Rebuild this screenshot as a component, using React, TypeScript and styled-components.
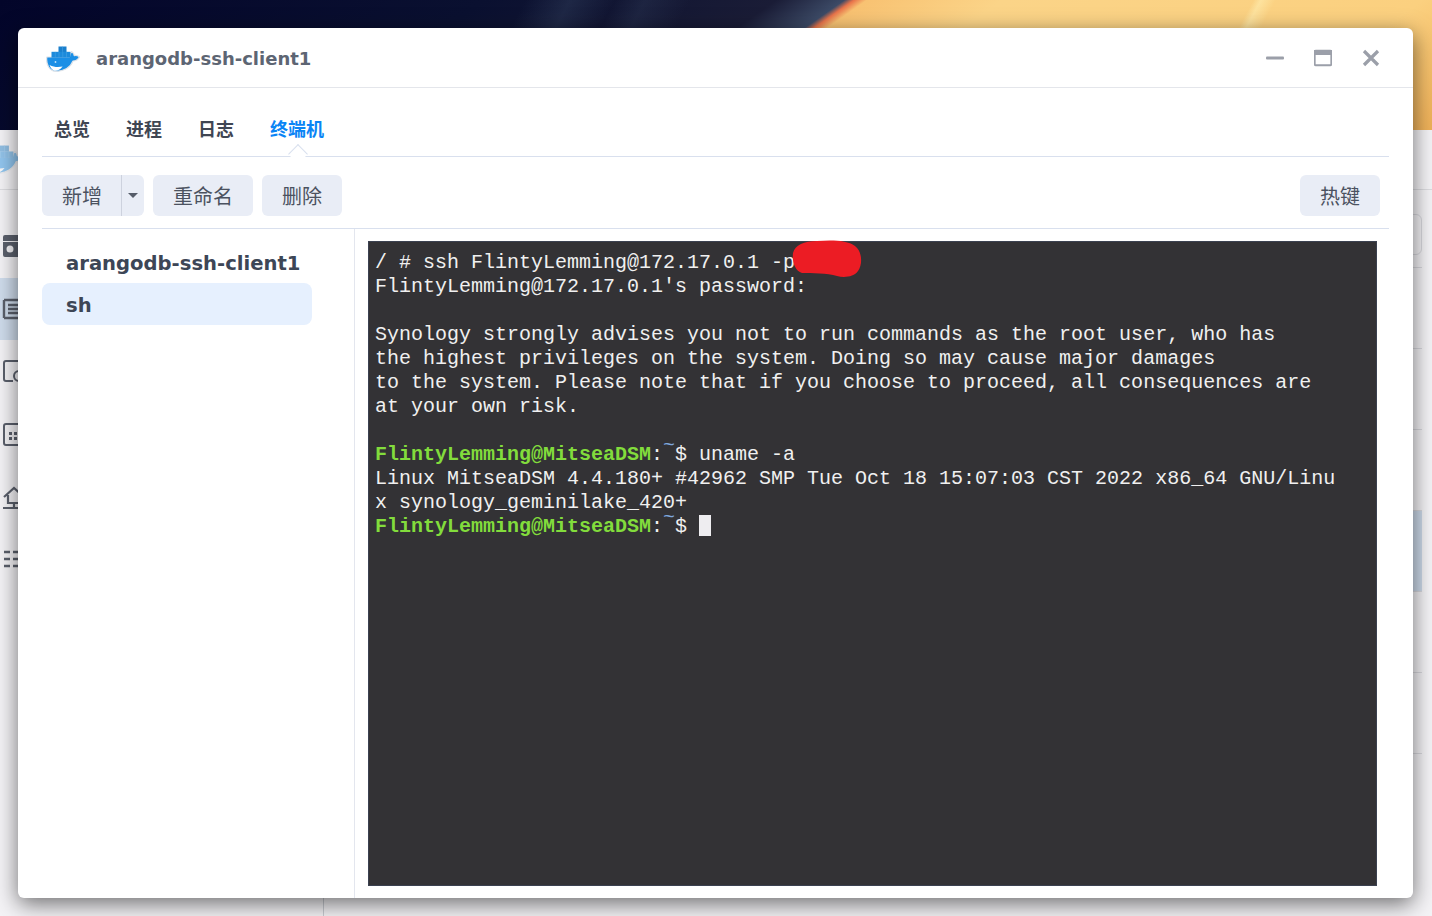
import React from "react";
import styled, { createGlobalStyle } from "styled-components";

const CJK = `"Noto Sans CJK SC", "Noto Sans", sans-serif`;
const LATIN_UI = `"DejaVu Sans", "Noto Sans CJK SC", sans-serif`;

const GlobalStyle = createGlobalStyle`
  html, body {
    margin: 0;
    padding: 0;
    background: #f4f3f6;
  }
  * {
    box-sizing: border-box;
  }
`;

const Desktop = styled.div`
  position: relative;
  display: flex;
  flex-direction: column;
  width: 1432px;
  height: 916px;
  overflow: hidden;
`;

const Wallpaper = styled.div`
  height: 130px;
  flex: none;
  background:
    linear-gradient(118deg, transparent 83.5%, rgba(255, 240, 180, 0.55) 84%, transparent 85%),
    linear-gradient(118deg, transparent 35%, rgba(70, 90, 120, 0.28) 38%, transparent 41%),
    linear-gradient(118deg, transparent 41%, rgba(70, 90, 120, 0.2) 43%, transparent 46%),
    linear-gradient(
      145deg,
      #03052a 0%,
      #0a1030 30%,
      #1a1c36 48%,
      #3c4a66 52.2%,
      #e8734a 52.8%,
      #f8c272 53.6%,
      #fbd488 62%,
      #fbd07f 88%,
      #eeb058 100%
    );
`;

const BackWindow = styled.div`
  flex: 1;
  display: grid;
  grid-template-columns: 324px 1fr;
  background: #f4f3f6;
`;

const BackSidebar = styled.div`
  border-right: 1px solid #c9ccd2;
`;

const BackHeader = styled.div`
  display: flex;
  align-items: center;
  height: 60px;
  padding-left: 0;
  border-bottom: 1px solid #dcdce0;
  overflow: hidden;

  svg {
    margin-left: -14px;
    opacity: 0.45;
  }
`;

const BackNav = styled.div`
  padding-top: 25px;
`;

const BackNavItem = styled.div<{ $active?: boolean }>`
  display: flex;
  align-items: center;
  height: 62.6px;
  padding-left: 2px;
  color: #5b606c;
  background: ${(p) => (p.$active ? "#cfdcec" : "transparent")};
`;

const BackMain = styled.div`
  border-top: 60px solid transparent;
  background-clip: padding-box;
`;

const BackHeaderLine = styled.div`
  height: 1px;
  margin-top: -1px;
  background: #dcdce0;
`;

const BackSearch = styled.div`
  height: 41px;
  margin: 24px 10px 0 0;
  border: 1px solid #d9d9de;
  border-radius: 6px;
`;

const BackList = styled.div`
  margin: 12px 10px 0 0;
  border-top: 1px solid #d9d9de;
`;

const BackRow = styled.div<{ $active?: boolean }>`
  height: 81px;
  border-bottom: 1px solid #d9d9de;
  background: ${(p) => (p.$active ? "#cddaea" : "transparent")};
`;

const ContainerWindow = styled.div`
  position: absolute;
  left: 18px;
  top: 28px;
  display: flex;
  flex-direction: column;
  width: 1395px;
  height: 870px;
  background: #fff;
  border-radius: 6px;
  box-shadow: 0 6px 22px rgba(0, 0, 0, 0.55);
`;

const TitleBar = styled.div`
  display: flex;
  align-items: center;
  flex: none;
  height: 60px;
  padding: 0 33px 0 28px;
  border-bottom: 1px solid #e4e6eb;
`;

const LogoSlot = styled.div`
  display: flex;
  padding-top: 2px;
`;

const TitleText = styled.span`
  flex: 1;
  margin-left: 16px;
  padding-top: 2px;
  font: 700 18px ${LATIN_UI};
  color: #5d6573;
`;

const WindowButtons = styled.div`
  display: flex;
  align-items: center;
  gap: 30px;
`;

const TabBar = styled.div`
  display: flex;
  flex: none;
  gap: 36px;
  height: 69px;
  margin: 0 24px;
  padding: 12px 0 0 12px;
  align-items: center;
  border-bottom: 1px solid #d9e0ee;
`;

const Tab = styled.div<{ $active?: boolean }>`
  position: relative;
  font: 700 18px/26px ${CJK};
  color: ${(p) => (p.$active ? "#0a84f5" : "#3f4653")};

  ${(p) =>
    p.$active
      ? `&::after {
          content: "";
          position: absolute;
          left: 50%;
          bottom: -20px;
          width: 13px;
          height: 13px;
          margin-left: -6.5px;
          background: #fff;
          border-left: 1px solid #d9e0ee;
          border-top: 1px solid #d9e0ee;
          transform: rotate(45deg);
        }`
      : ""}
`;

const Toolbar = styled.div`
  display: flex;
  flex: none;
  align-items: flex-start;
  gap: 9px;
  height: 72px;
  margin: 0 24px;
  padding: 18px 9px 0 0;
  border-bottom: 1px solid #d9e0ee;
`;

const ToolButton = styled.div`
  display: flex;
  align-items: center;
  justify-content: center;
  height: 41px;
  padding: 0 20px;
  border-radius: 6px;
  background: #e9edf6;
  font: 400 20px ${CJK};
  color: #4b5260;
`;

const SplitMain = styled(ToolButton)`
  width: 80px;
  padding: 0 0 0 1px;
  border-radius: 6px 0 0 6px;
  border-right: 1px solid #cdd2de;
`;

const SplitArrow = styled(ToolButton)`
  width: 22px;
  padding: 0;
  border-radius: 0 6px 6px 0;
`;

const SplitButton = styled.div`
  display: flex;
`;

const Caret = styled.span`
  width: 0;
  height: 0;
  border-left: 5px solid transparent;
  border-right: 5px solid transparent;
  border-top: 5px solid #555c69;
`;

const ToolSpacer = styled.div`
  flex: 1;
`;

const Content = styled.div`
  display: flex;
  flex: 1;
  min-height: 0;
  padding-left: 24px;
`;

const SessionList = styled.div`
  flex: none;
  width: 313px;
  padding-top: 12px;
  border-right: 1px solid #e3e6ee;
`;

const SessionItem = styled.div<{ $active?: boolean }>`
  display: flex;
  align-items: center;
  width: 270px;
  height: 42px;
  padding: 2px 0 0 24px;
  border-radius: 8px;
  background: ${(p) => (p.$active ? "#e6f0fe" : "transparent")};
  font: 700 19.6px ${LATIN_UI};
  color: #3d4656;
`;

const Terminal = styled.div`
  position: relative;
  flex: 1;
  margin: 12px 36px 12px 13px;
  padding: 9px 6px 5px;
  border: 1px solid #3b4150;
  background: #333235;
  font: 400 20px/24px "Liberation Mono", monospace;
  color: #f0f0f0;
`;

const TermLine = styled.div`
  height: 24px;
  white-space: pre;
`;

const Prompt = styled.span`
  font-weight: 700;
  color: #82dc3c;
`;

const Tilde = styled.span`
  position: relative;
  top: -9px;
  color: #7ea6dc;
`;

const TermCursor = styled.span`
  display: inline-block;
  width: 12px;
  height: 21px;
  vertical-align: -4px;
  background: #eeedf0;
`;

const Redaction = styled.svg`
  position: absolute;
  left: 423px;
  top: -2px;
`;

function DockerLogo({ size = 34 }: { size?: number }) {
  return (
    <svg width={size} height={(size * 26) / 34} viewBox="0 0 34 26">
      <path
        d="M.8 11H23.5C24 8.5 24.6 6.8 25.6 5.6C27.4 6.8 28.2 8.4 28.2 9.6C29.8 9.1 31.8 9.5 33.4 11C32 13.8 29.2 15 27 15C24.8 21 18 25.4 10 25.4C3.6 25.4 -.2 18.5 .8 11Z"
        fill="#1b8fe6"
        stroke="#dfe3e8"
        strokeWidth="1.2"
        strokeLinejoin="round"
      />
      <path d="M3.6 19C8 21.4 12.4 21.4 16.6 20.6C14.4 23.8 11.6 24.8 9.4 24.8C6.8 24.8 4.6 22.2 3.6 19Z" fill="#fff" />
      <rect x="12.5" y=".5" width="8" height="5.5" fill="#1a7fcc" />
      <rect x="5.5" y="5.8" width="19" height="5.8" fill="#1c8adb" />
      <path
        d="M9.3 5.8V11.6M13 5.8V11.6M16.8 5.8V11.6M20.5 5.8V11.6M16.5 .5V5.8"
        stroke="#4aa6e6"
        strokeWidth=".5"
      />
      <circle cx="9.5" cy="16" r=".9" fill="#bfe2fa" />
    </svg>
  );
}

function MinimizeIcon() {
  return (
    <svg width="18" height="18" viewBox="0 0 18 18">
      <rect y="7.5" width="18" height="3" rx="1" fill="#9b9fa9" />
    </svg>
  );
}

function MaximizeIcon() {
  return (
    <svg width="18" height="18" viewBox="0 0 18 18">
      <rect x=".75" y="1.75" width="16.5" height="14.5" rx="1" fill="none" stroke="#9b9fa9" strokeWidth="1.8" />
      <rect y="1" width="18" height="5" fill="#9b9fa9" />
    </svg>
  );
}

function CloseIcon() {
  return (
    <svg width="18" height="18" viewBox="0 0 18 18">
      <path d="M2 2L16 16M16 2L2 16" stroke="#9b9fa9" strokeWidth="3.2" />
    </svg>
  );
}

// overview icons of the main docker window, mostly hidden under the container window
const navIcons = [
  <path
    key="a"
    fillRule="evenodd"
    d="M3 1h18a2 2 0 0 1 2 2v18a2 2 0 0 1-2 2H3a2 2 0 0 1-2-2V3a2 2 0 0 1 2-2ZM1 7v1h22V7ZM8 11.5a3.5 3.5 0 1 0 0 7 3.5 3.5 0 0 0 0-7Z"
    fill="currentColor"
  />,
  <path
    key="b"
    d="M2 3h20M2 21h20M2 3v18M6 8h16M6 12h16M6 16h16"
    fill="none"
    stroke="currentColor"
    strokeWidth="2.4"
  />,
  <g key="c" fill="none" stroke="currentColor" strokeWidth="2">
    <path d="M11 22H4a2 2 0 0 1-2-2V4a2 2 0 0 1 2-2h16" />
    <circle cx="17" cy="17" r="5" />
  </g>,
  <g key="d">
    <rect x="2" y="2" width="22" height="21" rx="2" fill="none" stroke="currentColor" strokeWidth="2" />
    <path d="M7 10h3v3H7ZM12 10h3v3h-3ZM7 15h3v3H7ZM12 15h3v3h-3Z" fill="currentColor" />
  </g>,
  <g key="e" fill="none" stroke="currentColor" strokeWidth="2.2">
    <path d="M2 12 12 3l10 9M6 10v8h12v-8" />
    <path d="M1 23h22M12 18v5" />
  </g>,
  <path key="f" d="M2 5h6M11 5h12M2 12h6M11 12h12M2 19h6M11 19h12" stroke="currentColor" strokeWidth="2.6" />,
];

export default function App() {
  return (
    <>
      <GlobalStyle />
      <Desktop>
        <Wallpaper />
        <BackWindow>
          <BackSidebar>
            <BackHeader>
              <DockerLogo size={38} />
            </BackHeader>
            <BackNav>
              {navIcons.map((icon, i) => (
                <BackNavItem key={i} $active={i === 1}>
                  <svg width="24" height="24" viewBox="0 0 24 24">
                    {icon}
                  </svg>
                </BackNavItem>
              ))}
            </BackNav>
          </BackSidebar>
          <BackMain>
            <BackHeaderLine />
            <BackSearch />
            <BackList>
              <BackRow />
              <BackRow />
              <BackRow />
              <BackRow $active />
              <BackRow />
              <BackRow />
            </BackList>
          </BackMain>
        </BackWindow>

        <ContainerWindow>
          <TitleBar>
            <LogoSlot>
              <DockerLogo />
            </LogoSlot>
            <TitleText>arangodb-ssh-client1</TitleText>
            <WindowButtons>
              <MinimizeIcon />
              <MaximizeIcon />
              <CloseIcon />
            </WindowButtons>
          </TitleBar>

          <TabBar>
            <Tab>总览</Tab>
            <Tab>进程</Tab>
            <Tab>日志</Tab>
            <Tab $active>终端机</Tab>
          </TabBar>

          <Toolbar>
            <SplitButton>
              <SplitMain>新增</SplitMain>
              <SplitArrow>
                <Caret />
              </SplitArrow>
            </SplitButton>
            <ToolButton>重命名</ToolButton>
            <ToolButton>删除</ToolButton>
            <ToolSpacer />
            <ToolButton>热键</ToolButton>
          </Toolbar>

          <Content>
            <SessionList>
              <SessionItem>arangodb-ssh-client1</SessionItem>
              <SessionItem $active>sh</SessionItem>
            </SessionList>
            <Terminal>
              <TermLine>/ # ssh FlintyLemming@172.17.0.1 -p</TermLine>
              <TermLine>FlintyLemming@172.17.0.1's password:</TermLine>
              <TermLine />
              <TermLine>Synology strongly advises you not to run commands as the root user, who has</TermLine>
              <TermLine>the highest privileges on the system. Doing so may cause major damages</TermLine>
              <TermLine>to the system. Please note that if you choose to proceed, all consequences are</TermLine>
              <TermLine>at your own risk.</TermLine>
              <TermLine />
              <TermLine>
                <Prompt>FlintyLemming@MitseaDSM</Prompt>:<Tilde>~</Tilde>$ uname -a
              </TermLine>
              <TermLine>Linux MitseaDSM 4.4.180+ #42962 SMP Tue Oct 18 15:07:03 CST 2022 x86_64 GNU/Linu</TermLine>
              <TermLine>x synology_geminilake_420+</TermLine>
              <TermLine>
                <Prompt>FlintyLemming@MitseaDSM</Prompt>:<Tilde>~</Tilde>$ <TermCursor />
              </TermLine>
              <Redaction width="70" height="39" viewBox="0 0 70 39">
                <path
                  d="M1 13C3 5 12 1 25 1C40 0 55 0 63 6C70 11 71 24 66 31C62 37 52 38 45 36C35 33 20 33 10 33C3 31 0 22 1 13Z"
                  fill="#ec1c24"
                />
              </Redaction>
            </Terminal>
          </Content>
        </ContainerWindow>
      </Desktop>
    </>
  );
}
